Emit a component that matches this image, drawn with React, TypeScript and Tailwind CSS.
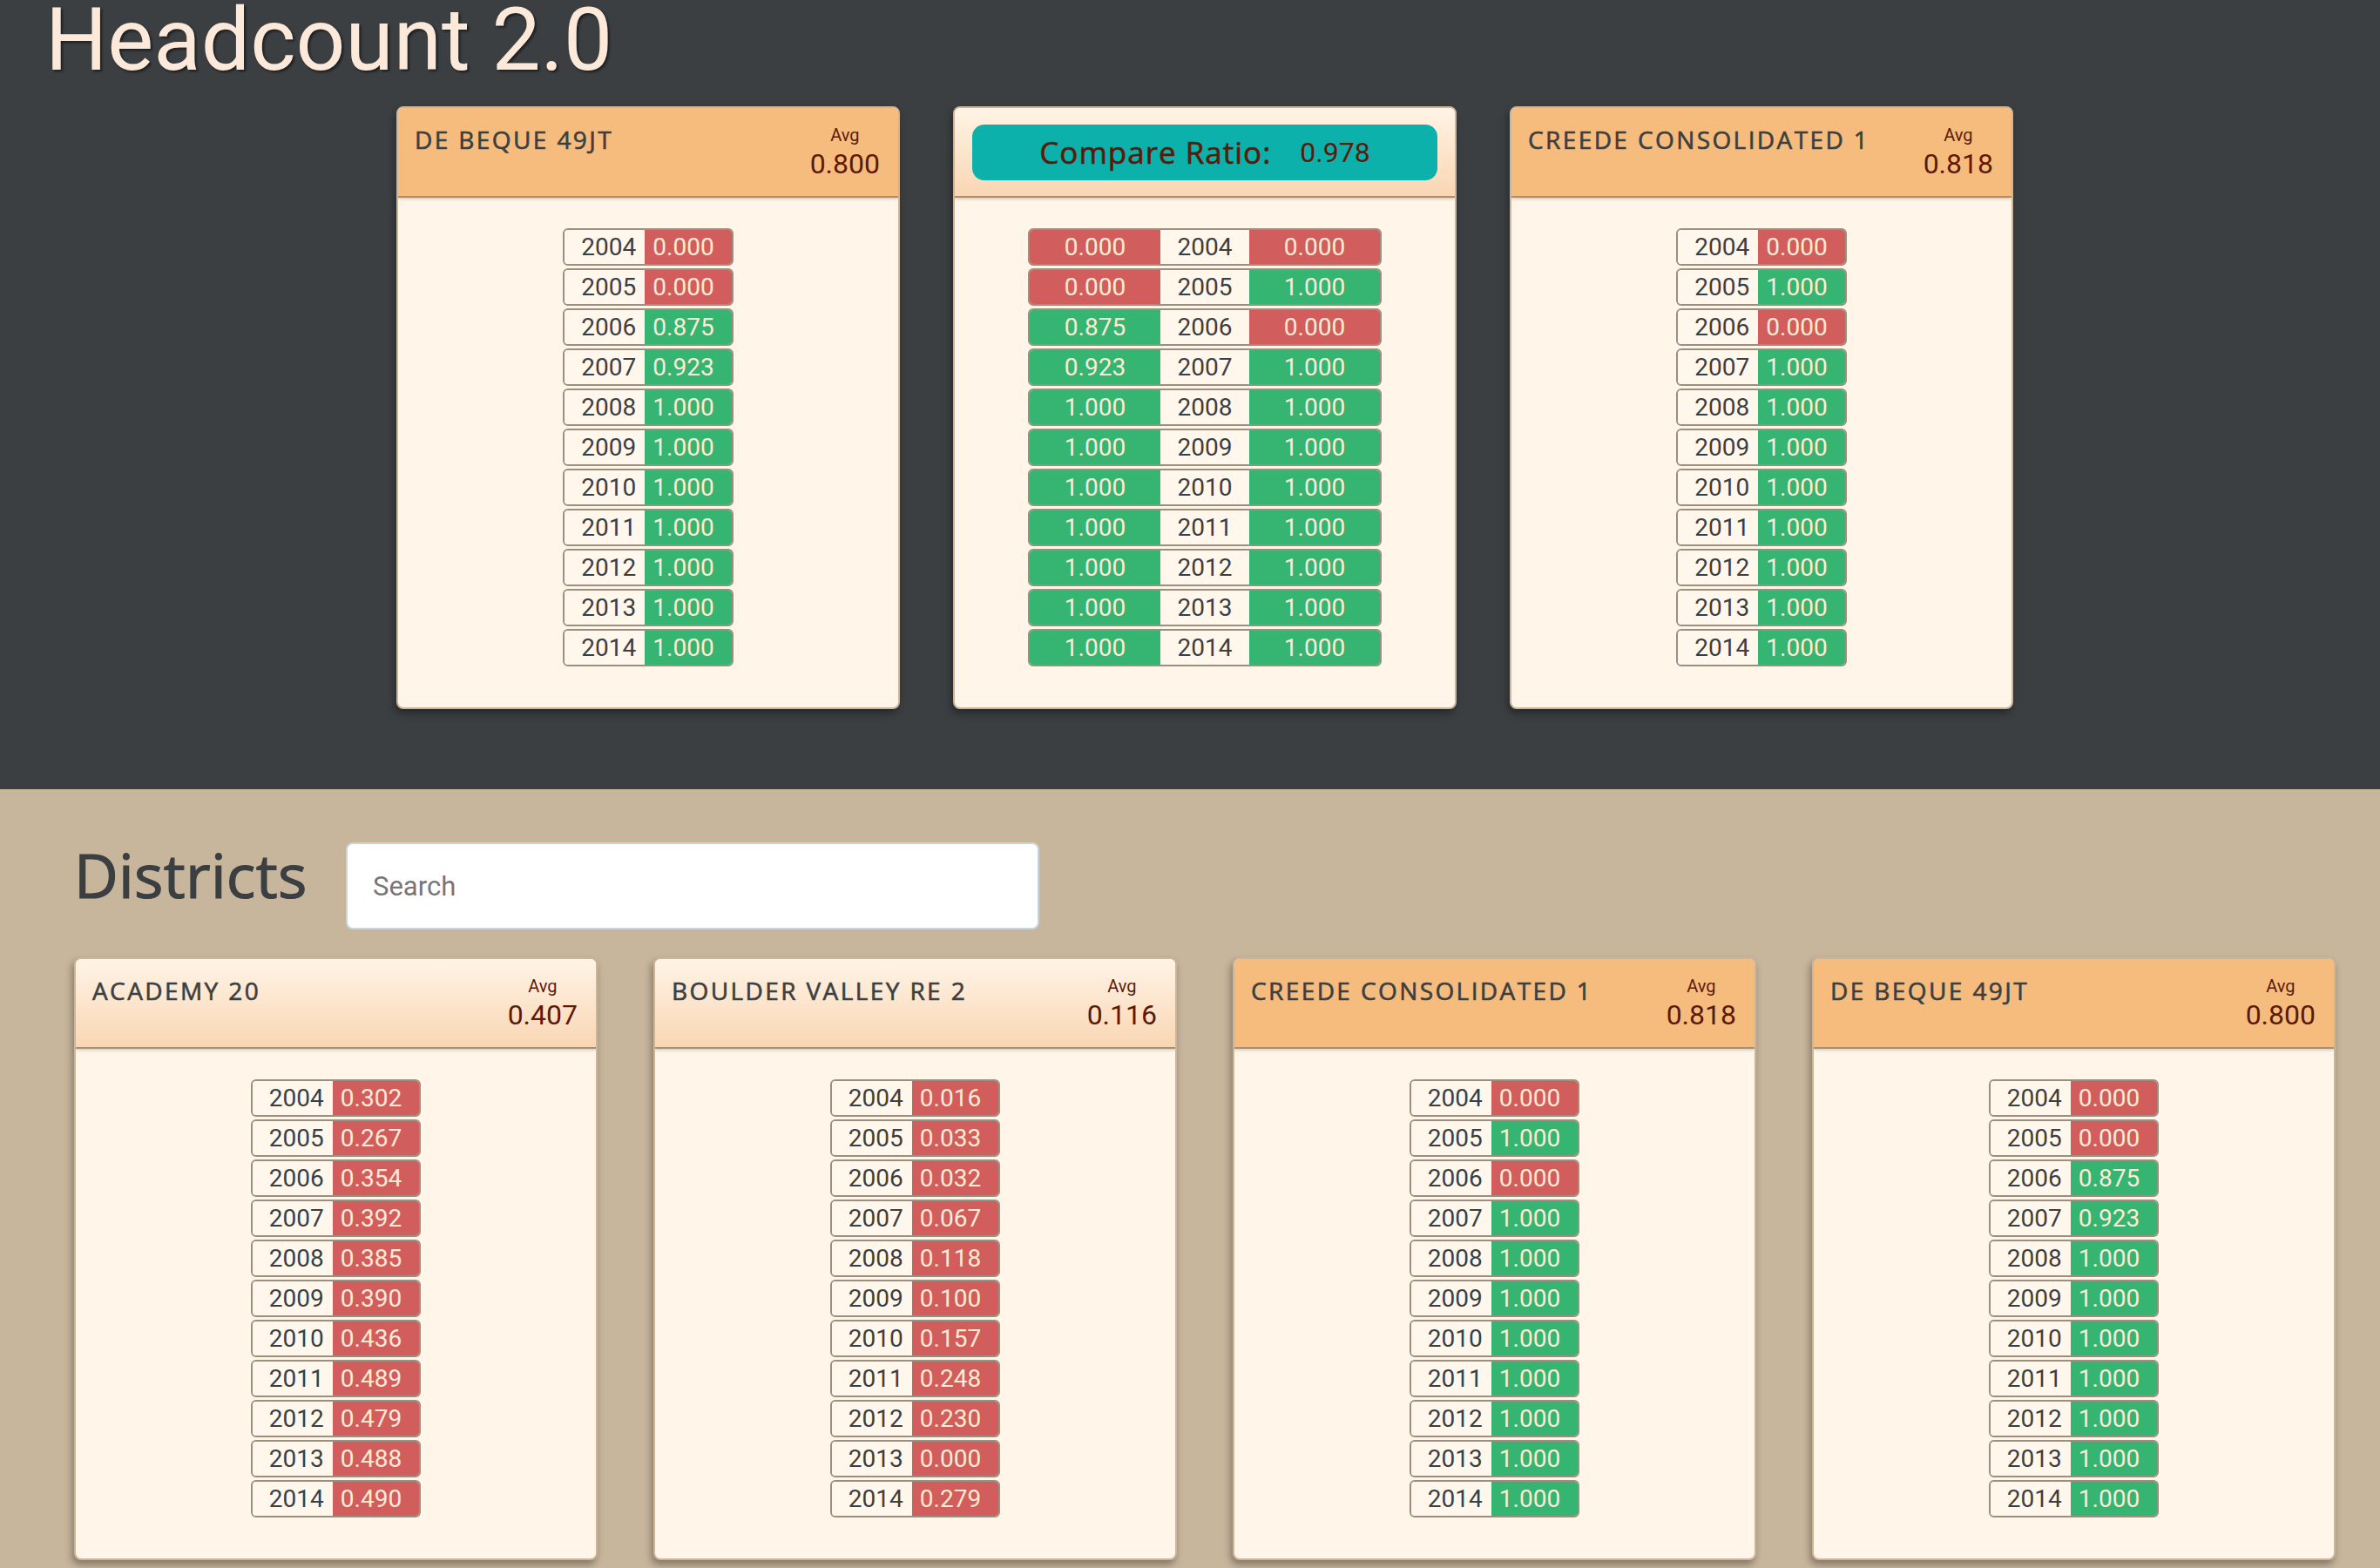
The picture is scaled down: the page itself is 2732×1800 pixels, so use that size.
import * as React from 'react';

type District = {
    name: string;
    avg: string;
    values: string[];
    selected?: boolean;
};

const YEARS = ['2004', '2005', '2006', '2007', '2008', '2009', '2010', '2011', '2012', '2013', '2014'];

const deBeque: District = {
    name: 'DE BEQUE 49JT',
    avg: '0.800',
    values: ['0.000', '0.000', '0.875', '0.923', '1.000', '1.000', '1.000', '1.000', '1.000', '1.000', '1.000'],
    selected: true,
};

const creede: District = {
    name: 'CREEDE CONSOLIDATED 1',
    avg: '0.818',
    values: ['0.000', '1.000', '0.000', '1.000', '1.000', '1.000', '1.000', '1.000', '1.000', '1.000', '1.000'],
    selected: true,
};

const districts: District[] = [
    {
        name: 'ACADEMY 20',
        avg: '0.407',
        values: ['0.302', '0.267', '0.354', '0.392', '0.385', '0.390', '0.436', '0.489', '0.479', '0.488', '0.490'],
    },
    {
        name: 'BOULDER VALLEY RE 2',
        avg: '0.116',
        values: ['0.016', '0.033', '0.032', '0.067', '0.118', '0.100', '0.157', '0.248', '0.230', '0.000', '0.279'],
    },
    creede,
    deBeque,
];

// rounded display face stand-in: regular weight with a hairline stroke
const heading = "font-['Open_Sans','Noto_Sans',sans-serif] [-webkit-text-stroke:0.6px_currentColor]";
const num = "font-['Roboto','Liberation_Sans',sans-serif]";

function valueColor(v: string) {
    return parseFloat(v) >= 0.5 ? 'bg-[#36b471]' : 'bg-[#d15e5c]';
}

function YearRow({ year, value }: { year: string; value: string }) {
    return (
        <div className={`flex h-[43px] border-2 border-[#9b8f7f] rounded-[6px] overflow-hidden text-[28px] leading-[39px] ${num}`}>
            <span className="pl-[19px] pr-[10px] bg-[#fff7ec] text-[#3b3f42]">{year}</span>
            <span className={`pl-[9px] pr-[20px] text-[#fdebd6] ${valueColor(value)}`}>{value}</span>
        </div>
    );
}

function CompareRow({ year, left, right }: { year: string; left: string; right: string }) {
    return (
        <div className={`flex h-[43px] border-2 border-[#9b8f7f] rounded-[6px] overflow-hidden text-[28px] leading-[39px] ${num}`}>
            <span className={`w-[150px] text-center text-[#fdebd6] ${valueColor(left)}`}>{left}</span>
            <span className="w-[102px] text-center bg-[#fff7ec] text-[#3b3f42]">{year}</span>
            <span className={`w-[150px] text-center text-[#fdebd6] ${valueColor(right)}`}>{right}</span>
        </div>
    );
}

function headerBg(selected?: boolean) {
    return selected ? 'bg-[#f6bc7e]' : 'bg-gradient-to-b from-[#fff4e6] to-[#f9d6b3]';
}

function DistrictCard({ d, width }: { d: District; width: string }) {
    return (
        <div className={`${width} shrink-0 border-2 border-[#cdb597] rounded-[8px] bg-[#fff5e8] overflow-hidden shadow-[-2px_5px_8px_rgba(0,0,0,0.35)]`}>
            <div className={`h-[103px] flex justify-between items-start pl-[19px] pr-[21px] pt-[18px] border-b-2 border-[#ad8f6e] shadow-[0_2px_3px_rgba(0,0,0,0.15)] ${headerBg(d.selected)}`}>
                <div className={`text-[28px] leading-[36px] tracking-[2.4px] text-[#3b3f42] ${heading}`}>{d.name}</div>
                <div className={`mt-[2px] flex flex-col items-center text-[#5b1a08] ${num}`}>
                    <span className="text-[20px] leading-[22px]">Avg</span>
                    <span className="mt-[4px] text-[32px] leading-[36px]">{d.avg}</span>
                </div>
            </div>
            <div className="pt-[35px] pb-[47px] flex flex-col items-center gap-[3px]">
                {YEARS.map((y, i) => (
                    <YearRow key={y} year={y} value={d.values[i]} />
                ))}
            </div>
        </div>
    );
}

function CompareCard() {
    return (
        <div className="w-[578px] shrink-0 border-2 border-[#cdb597] rounded-[8px] bg-[#fff5e8] overflow-hidden shadow-[-2px_5px_8px_rgba(0,0,0,0.35)]">
            <div className="h-[103px] pt-[19px] px-[20px] border-b-2 border-[#ad8f6e] shadow-[0_2px_3px_rgba(0,0,0,0.15)] bg-gradient-to-b from-[#fff4e6] to-[#f9d6b3]">
                <div className="h-[64px] rounded-[14px] bg-[#0db1ac] flex items-center justify-center gap-[33px] text-[#5b1a08]">
                    <span className={`text-[35px] leading-[40px] tracking-[1px] ${heading}`}>Compare Ratio:</span>
                    <span className={`text-[32px] leading-[40px] ${num}`}>0.978</span>
                </div>
            </div>
            <div className="pt-[35px] pb-[47px] flex flex-col items-center gap-[3px]">
                {YEARS.map((y, i) => (
                    <CompareRow key={y} year={y} left={deBeque.values[i]} right={creede.values[i]} />
                ))}
            </div>
        </div>
    );
}

export default function App() {
    return (
        <div className="min-h-[1800px] bg-[#c7b59c]">
            <section className="h-[906px] bg-[#3b3f42] overflow-hidden">
                <h1 className={`pl-[52px] mt-[5px] text-[100px] leading-[82px] text-[#fde9d9] [text-shadow:2px_2px_3px_rgba(0,0,0,0.55)] ${num}`}>
                    Headcount 2.0
                </h1>
                <div className="mt-[35px] pl-[455px] flex gap-[61px]">
                    <DistrictCard d={deBeque} width="w-[578px]" />
                    <CompareCard />
                    <DistrictCard d={creede} width="w-[578px]" />
                </div>
            </section>

            <section className="px-[85px] pt-[61px] pb-[40px]">
                <div className="flex items-start">
                    <h2 className={`w-[312px] mt-[2px] text-[70px] leading-[70px] tracking-[0.3px] text-[#3b3f42] ${heading} [-webkit-text-stroke:1.2px_currentColor]`}>Districts</h2>
                    <input
                        type="text"
                        placeholder="Search"
                        className={`w-[796px] h-[100px] bg-white border-2 border-[#c9d5dc] rounded-[8px] pl-[29px] text-[31px] text-[#3b3f42] placeholder:text-[#767676] outline-none ${num}`}
                    />
                </div>
                <div className="mt-[32px] flex gap-[64px]">
                    {districts.map((d) => (
                        <DistrictCard key={d.name} d={d} width="w-[601px]" />
                    ))}
                </div>
            </section>
        </div>
    );
}
